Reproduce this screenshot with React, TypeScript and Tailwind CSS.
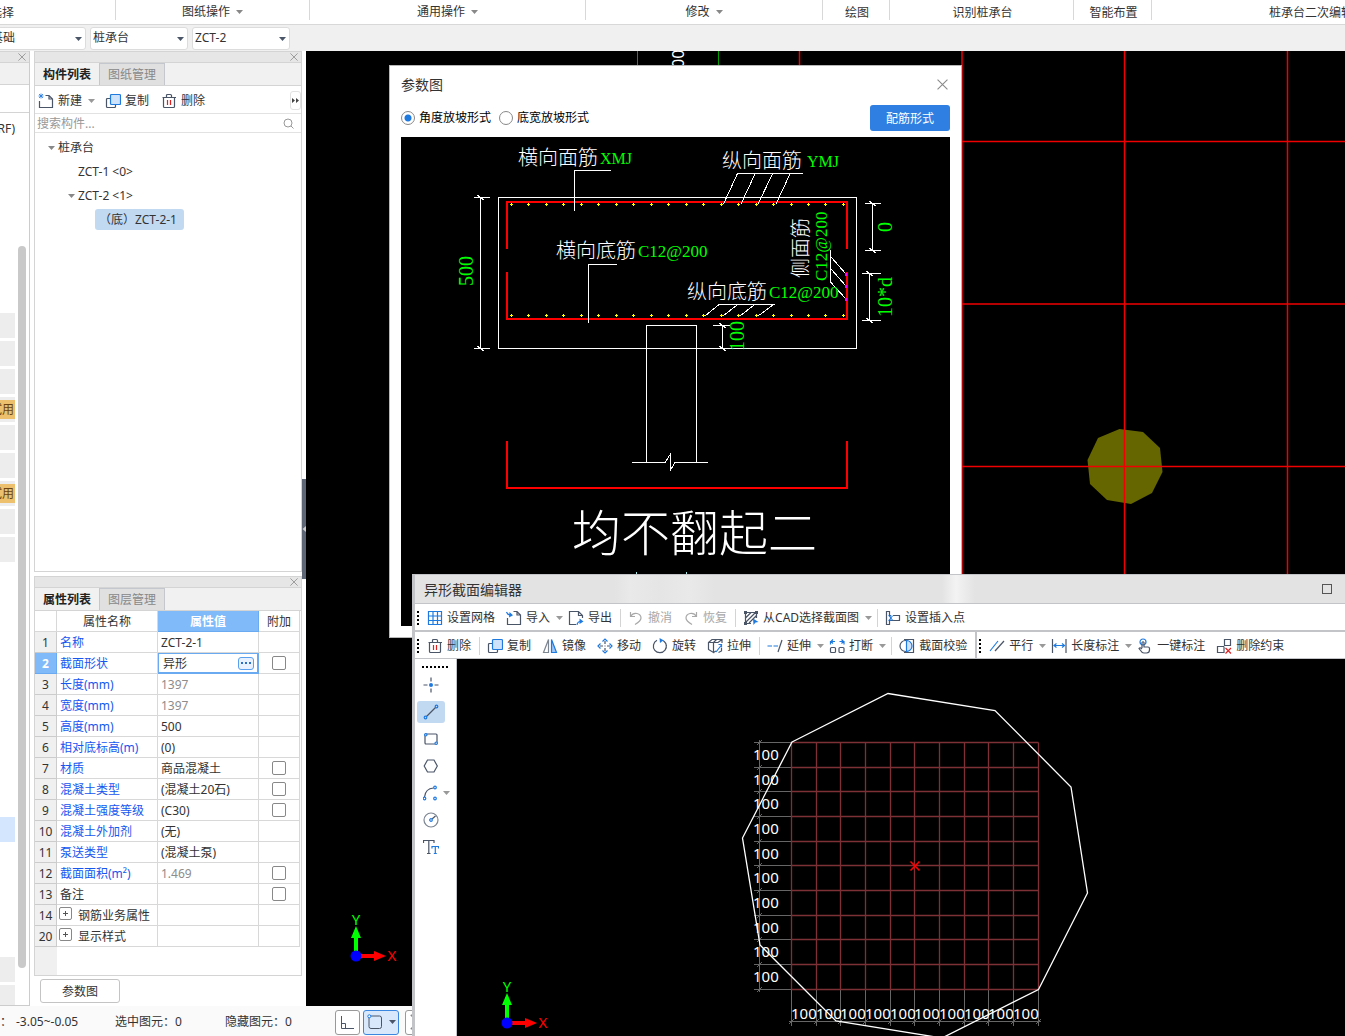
import React, { useState } from 'react';

const INK = '#4a5568';
const BLUE = '#1f7ae0';

const Caret = ({ className = 'text-[#999999]' }: { className?: string }) => (
  <svg width="7" height="4" viewBox="0 0 7 4" className={className}>
    <path d="M0 0H7L3.5 4Z" fill="currentColor" />
  </svg>
);

const Close = ({ size = 8 }: { size?: number }) => (
  <svg width={size} height={size} viewBox="0 0 10 10" fill="none" stroke="#8a8a8a">
    <path d="M0.5 0.5L9.5 9.5M9.5 0.5L0.5 9.5" />
  </svg>
);

const Icon = ({ children }: { children: React.ReactNode }) => (
  <svg width="16" height="16" viewBox="0 0 16 16" fill="none" stroke={INK} strokeWidth="1.2" className="shrink-0">
    {children}
  </svg>
);

const icons = {
  create: (
    <Icon>
      <path d="M7.5 2.5H11L14.5 6V14.5H1.5V8M11 2.5V6H14.5" />
      <path d="M1 1L5 5M5 1L1 5M3 0.5V5.5M0.5 3H5.5" stroke={BLUE} strokeWidth="0.8" />
    </Icon>
  ),
  copy: (
    <Icon>
      <path d="M5 5.5H2.5Q1.5 5.5 1.5 6.5V13.5Q1.5 14.5 2.5 14.5H9.5Q10.5 14.5 10.5 13.5V12" />
      <rect x="5.5" y="1.5" width="10" height="10" rx="1" fill="#cfe2fb" stroke={BLUE} />
    </Icon>
  ),
  trash: (
    <Icon>
      <path d="M1.5 4.5H15M5.5 4.5V2.5Q5.5 1.5 6.5 1.5H9.5Q10.5 1.5 10.5 2.5V4.5M2.5 4.5V13.5Q2.5 14.5 3.5 14.5H12.5Q13.5 14.5 13.5 13.5V4.5" />
      <path d="M6.5 7V12M9.5 7V12" stroke="#e02020" />
    </Icon>
  ),
  grid: (
    <Icon>
      <path d="M1.5 1.5H14.5V14.5H1.5ZM1.5 6H14.5M1.5 10.5H14.5M6 1.5V14.5M10.5 1.5V14.5" stroke={BLUE} />
    </Icon>
  ),
  importFile: (
    <Icon>
      <path d="M7.5 1.5H11L14.5 5V14.5H1.5V8M11 1.5V5H14.5" />
      <path d="M0.5 2Q1.5 5 5 5" stroke={BLUE} />
      <path d="M3.5 2L7 5.2L3 7.5Z" fill={BLUE} stroke="none" />
    </Icon>
  ),
  exportFile: (
    <Icon>
      <path d="M8 14.5H1.5V1.5H10.5L14.5 5.5V8M10.5 1.5V5.5H14.5" />
      <path d="M9 15Q9.5 11.5 12.5 11.5" stroke={BLUE} />
      <path d="M11.5 8.5L15.5 11.5L11.5 14Z" fill={BLUE} stroke="none" />
    </Icon>
  ),
  undo: (
    <Icon>
      <path d="M2.5 2V6.5H7M2.5 6.5Q5 2.5 9 3.5Q13 4.5 13 8Q13 11 7 14.5" stroke="#a8a8a8" />
    </Icon>
  ),
  redo: (
    <Icon>
      <path d="M13.5 2V6.5H9M13.5 6.5Q11 2.5 7 3.5Q3 4.5 3 8Q3 11 9 14.5" stroke="#a8a8a8" />
    </Icon>
  ),
  cad: (
    <Icon>
      <path d="M2.5 3V13M3 2.5H13M13.5 3V8M3 13.5H8M2.5 8L8 2.5M2.5 12.5L12.5 2.5M6 13L13.5 5.5" />
      <path d="M1 1H4V4H1ZM12 1H15V4H12ZM1 12H4V15H1Z" fill={INK} stroke="none" />
      <path d="M10 8.5L15.5 12L12.5 12.5L10.5 15Z" fill={BLUE} stroke="none" />
    </Icon>
  ),
  insertPoint: (
    <Icon>
      <path d="M6 5.5H4.5V1.5H1.5V14.5H4.5V10.5H14.5V5.5H8" />
      <path d="M3.5 5.5L8 10.5M8 5.5L3.5 10.5M5.8 5V11" stroke={BLUE} strokeWidth="1" />
    </Icon>
  ),
  mirror: (
    <Icon>
      <path d="M6.5 1.5V14.5H1.5Z" stroke="#7c8592" />
      <path d="M9.5 1.5V14.5H14.5Z" fill="#9cc6f7" stroke={BLUE} />
    </Icon>
  ),
  move: (
    <Icon>
      <path d="M8 3V6M8 10V13M3 8H6M10 8H13" />
      <path d="M5.5 3.5L8 1L10.5 3.5M5.5 12.5L8 15L10.5 12.5M3.5 5.5L1 8L3.5 10.5M12.5 5.5L15 8L12.5 10.5" stroke={BLUE} />
      <path d="M7.5 8H8.5" />
    </Icon>
  ),
  rotate: (
    <Icon>
      <path d="M10.5 2.2A6.5 6.5 0 1 1 5 2.3M12 3.2A6.5 6.5 0 0 1 14.5 8" />
      <path d="M7.5 0L11.5 2.3L8 5Z" fill={BLUE} stroke="none" />
    </Icon>
  ),
  stretch: (
    <Icon>
      <path d="M1.5 4.5H6.5V14.5L1.5 11.5ZM1.5 4.5L5 1.5H15V5M6.5 4.5L9.5 1.5M6.5 4.5H11L15 1.5M6.5 14.5L9 13" />
      <path d="M9 14L14.5 7M11.5 6.5H14.5V9.5" stroke={BLUE} />
      <path d="M14.5 10V13L11.5 14.5" />
    </Icon>
  ),
  extend: (
    <Icon>
      <path d="M0.5 8H5M6.5 8H11" stroke={BLUE} />
      <path d="M11 14L15 2" />
    </Icon>
  ),
  split: (
    <Icon>
      <rect x="1.5" y="9.5" width="5" height="5" rx="1" />
      <rect x="10" y="9.5" width="5" height="5" rx="1" />
      <path d="M1.5 6.5V3.5H6M4 1.5L2 3.5L4 5.5M15 6.5V3.5H10.5M12.5 1.5L14.5 3.5L12.5 5.5" stroke={BLUE} />
    </Icon>
  ),
  verify: (
    <Icon>
      <path d="M5 1.5H14.5V14.5H5" />
      <circle cx="6.5" cy="8" r="5.5" />
      <path d="M7.5 2.5A5.5 5.5 0 0 1 7.5 13.5Z" fill="#cfe2fb" stroke={BLUE} />
    </Icon>
  ),
  parallel: (
    <Icon>
      <path d="M1 13L9 3" stroke={BLUE} />
      <path d="M6 13L15 3" />
    </Icon>
  ),
  length: (
    <Icon>
      <path d="M1.5 1V15M15 1V15" />
      <path d="M3 7.5H13.5M5.5 5.5L3 7.5L5.5 9.5M11 5.5L13.5 7.5L11 9.5" stroke={BLUE} />
    </Icon>
  ),
  hand: (
    <Icon>
      <circle cx="6" cy="4" r="3" stroke={BLUE} />
      <path d="M5 10V4.5Q6 3 7 4.5V9H11Q12.5 9 12.5 10.5V12Q12.5 15 9.5 15H7Q5 15 4 13L2 10.5Q3 9 5 11" />
    </Icon>
  ),
  unbind: (
    <Icon>
      <path d="M8.5 1.5H14.5V7.5H8.5ZM8 8.5H1.5V14.5H8V8.5" />
      <path d="M9.5 10L15 15.5M15 10L9.5 15.5" stroke="#e02020" />
    </Icon>
  ),
  point: (
    <Icon>
      <path d="M8 0.5V4.5M8 11.5V15.5M0.5 8H4.5M11.5 8H15.5" />
      <circle cx="8" cy="8" r="2" fill={BLUE} stroke="none" />
    </Icon>
  ),
  line: (
    <Icon>
      <path d="M3.5 12.5L12.5 3.5" />
      <circle cx="2.5" cy="13.5" r="1.3" stroke={BLUE} />
      <circle cx="13.5" cy="2.5" r="1.3" stroke={BLUE} />
    </Icon>
  ),
  rect: (
    <Icon>
      <rect x="2" y="3" width="12" height="10" rx="1" />
      <circle cx="2.8" cy="3.8" r="1.2" fill="#fff" stroke={BLUE} />
      <circle cx="13.2" cy="12.2" r="1.2" fill="#fff" stroke={BLUE} />
    </Icon>
  ),
  hexagon: (
    <Icon>
      <path d="M4.5 2H11L14.3 8L11 14H4.5L1.2 8Z" />
    </Icon>
  ),
  arc: (
    <Icon>
      <path d="M1.5 12Q2.5 3.5 10.5 3" />
      <circle cx="1.5" cy="13.5" r="1.3" stroke={BLUE} />
      <circle cx="12" cy="2.5" r="1.3" stroke={BLUE} />
      <circle cx="12" cy="13.5" r="1.3" stroke={BLUE} />
    </Icon>
  ),
  circle: (
    <Icon>
      <circle cx="8" cy="8" r="7" stroke="#7c8592" />
      <path d="M9 7L12.5 4" />
      <circle cx="8" cy="8" r="1.3" stroke={BLUE} />
    </Icon>
  ),
  text: (
    <Icon>
      <path d="M0.5 4V1.5H11V4M5.8 1.5V14.5M4 14.5H7.5" />
      <path d="M9 9.5V7.5H15.5V9.5M12.3 7.5V14.5M10.8 14.5H13.8" stroke={BLUE} />
    </Icon>
  ),
};

type IconName = keyof typeof icons;

const ribbonGroups = [
  { label: '图纸操作', caret: true, width: 'w-[194px]' },
  { label: '通用操作', caret: true, width: 'w-[276px]' },
  { label: '修改', caret: true, width: 'w-[237px]' },
  { label: '绘图', caret: false, width: 'w-[67px]' },
  { label: '识别桩承台', caret: false, width: 'w-[184px]' },
  { label: '智能布置', caret: false, width: 'w-[78px]' },
];

const Ribbon = () => (
  <div className="flex h-[25px] shrink-0 border-b border-[#d8d8d8] bg-white">
    <div className="flex h-5 w-[116px] shrink-0 items-center border-r border-[#d8d8d8]">
      <span className="-ml-2.5 pt-1.5">选择</span>
    </div>
    {ribbonGroups.map((g) => (
      <div key={g.label} className={`flex h-5 shrink-0 items-center justify-center gap-1.5 border-r border-[#d8d8d8] ${g.width}`}>
        <span className={g.caret ? 'pt-1' : 'pt-1.5 pl-0.5'}>{g.label}</span>
        {g.caret && <Caret className="mt-1 text-[#888888]" />}
      </div>
    ))}
    <div className="flex h-5 min-w-[318px] flex-1 items-center justify-center">
      <span className="pt-1.5">桩承台二次编辑</span>
    </div>
  </div>
);

const Picker = ({ label, value }: { label: string; value: string }) => (
  <div className="relative h-[23px] w-[98px] shrink-0">
    <select
      aria-label={label}
      className="size-full appearance-none rounded-[3px] border border-[#dcdcdc] bg-white pl-0.5 leading-5"
    >
      <option>{value}</option>
    </select>
    <Caret className="pointer-events-none absolute top-2.5 right-1 text-[#4a5568]" />
  </div>
);

const stripRows = Array.from({ length: 25 }, (_, i) => {
  if (i === 3 || i === 6) return 'trial';
  if (i < 9 || i > 22) return 'plain';
  return i === 18 ? 'active' : 'empty';
});

const stripColors: Record<string, string> = {
  trial: 'bg-[#ededed]',
  plain: 'bg-[#ededed]',
  active: 'bg-[#d4e6fd]',
  empty: 'bg-white',
};

const NavStrip = () => (
  <div className="flex w-[30px] shrink-0 flex-col overflow-hidden border-r border-b border-[#cccccc] bg-white">
    <div className="flex h-3 shrink-0 items-center justify-end border-y border-[#d4d4d4] bg-[#e6e6e6] pr-[3px]">
      <Close />
    </div>
    <div className="h-[22px] shrink-0 border-b border-[#d4d4d4] bg-[#f1f1f1]" />
    <div className="h-7 shrink-0 border-b border-[#d4d4d4]" />
    <div className="flex min-h-0 flex-1 justify-between pr-[3px]">
      <div className="w-[15px] overflow-hidden">
        <p className="h-[200px] pt-2">
          <span className="float-right">(RF)</span>
        </p>
        {stripRows.map((kind, i) => (
          <div key={i} className={`mb-[3px] flex h-[25px] items-center justify-end ${stripColors[kind]}`}>
            {kind === 'trial' && (
              <span className="h-[19px] bg-[#ecc06c] pr-px leading-[19px] whitespace-nowrap text-[#6b4310]">试用</span>
            )}
          </div>
        ))}
      </div>
      <div className="mt-[133px] mb-[37px] w-2 rounded-full bg-[#c9c9c9]" />
    </div>
  </div>
);

const PanelHead = ({ tabs }: { tabs: [string, string] }) => (
  <>
    <div className="flex h-[11px] shrink-0 items-center justify-end border-b border-[#d4d4d4] bg-[#e6e6e6] pr-[3px]">
      <Close />
    </div>
    <div className="flex h-[23px] shrink-0 border-b border-[#d4d4d4] bg-[#f1f1f1]">
      <button className="w-[65px] border-r border-[#c4c8ce] pt-px font-bold text-[#222222]">{tabs[0]}</button>
      <button className="w-[65px] border-t border-r border-[#c4c8ce] bg-[#e0e0e0] text-[#888888]">{tabs[1]}</button>
    </div>
  </>
);

const ComponentPanel = () => (
  <div className="flex min-h-0 flex-1 flex-col border border-[#d4d4d4] bg-white">
    <PanelHead tabs={['构件列表', '图纸管理']} />
    <div className="flex h-7 shrink-0 items-center border-b border-[#e2e2e2] pt-0.5 pl-[3px]">
      <button className="flex items-center gap-1">{icons.create}新建</button>
      <Caret className="mr-2.5 ml-1.5 text-[#999999]" />
      <button className="mr-3 flex items-center gap-1">{icons.copy}复制</button>
      <button className="flex items-center gap-1">{icons.trash}删除</button>
      <button aria-label="更多" className="ml-auto flex h-[19px] w-[11px] items-center justify-center rounded-[3px] border border-[#e2e2e2]">
        <svg width="7" height="5" viewBox="0 0 7 5" fill="#444" className="shrink-0">
          <path d="M0 0L3 2.5L0 5ZM4 0L7 2.5L4 5Z" />
        </svg>
      </button>
    </div>
    <div className="flex h-[19px] shrink-0 items-center border-b border-[#e2e2e2] pr-[7px]">
      <input
        aria-label="搜索构件"
        placeholder="搜索构件..."
        className="min-w-0 flex-1 pt-0.5 pl-0.5 leading-4 outline-none placeholder:text-[#999999]"
      />
      <svg width="11" height="11" viewBox="0 0 11 11" fill="none" stroke="#999999">
        <circle cx="5" cy="5" r="4" />
        <path d="M8 8L10.5 10.5" />
      </svg>
    </div>
    <ul className="pt-[3px] leading-6">
      <li className="flex items-center gap-[3px] pl-[13px]">
        <Caret className="text-[#888888]" />
        桩承台
      </li>
      <li className="pl-[43px]">ZCT-1 &lt;0&gt;</li>
      <li className="flex items-center gap-[3px] pl-[33px]">
        <Caret className="text-[#888888]" />
        ZCT-2 &lt;1&gt;
      </li>
      <li className="flex h-[22px] items-center pl-[60px]">
        <span className="h-[21px] w-[89px] rounded-[3px] bg-[#c2d9f2] pl-1 leading-[21px] whitespace-nowrap">（底）ZCT-2-1</span>
      </li>
    </ul>
  </div>
);

type Row = { no: number; name: string; value: string; tone?: 'muted'; check?: boolean; plain?: boolean; group?: boolean };

const rows: Row[] = [
  { no: 1, name: '名称', value: 'ZCT-2-1' },
  { no: 2, name: '截面形状', value: '异形', check: true },
  { no: 3, name: '长度(mm)', value: '1397', tone: 'muted' },
  { no: 4, name: '宽度(mm)', value: '1397', tone: 'muted' },
  { no: 5, name: '高度(mm)', value: '500' },
  { no: 6, name: '相对底标高(m)', value: '(0)' },
  { no: 7, name: '材质', value: '商品混凝土', check: true },
  { no: 8, name: '混凝土类型', value: '(混凝土20石)', check: true },
  { no: 9, name: '混凝土强度等级', value: '(C30)', check: true },
  { no: 10, name: '混凝土外加剂', value: '(无)' },
  { no: 11, name: '泵送类型', value: '(混凝土泵)' },
  { no: 12, name: '截面面积(m²)', value: '1.469', tone: 'muted', check: true },
  { no: 13, name: '备注', value: '', plain: true, check: true },
  { no: 14, name: '钢筋业务属性', value: '', plain: true, group: true },
  { no: 20, name: '显示样式', value: '', plain: true, group: true },
];

const PropertyPanel = () => {
  const [shape, setShape] = useState('异形');

  return (
    <div className="flex h-[400px] shrink-0 flex-col border border-[#d4d4d4] bg-white">
      <PanelHead tabs={['属性列表', '图层管理']} />
      <table className="w-[265px] table-fixed border-separate border-spacing-0 leading-[18px]">
        <colgroup>
          <col className="w-[22px]" />
          <col className="w-[101px]" />
          <col className="w-[101px]" />
          <col className="w-[41px]" />
        </colgroup>
        <thead>
          <tr className="h-[21px]">
            <th className="border-r border-b border-[#d8d8d8] p-0" />
            <th className="border-r border-b border-[#d8d8d8] p-0 pt-0.5 font-normal">属性名称</th>
            <th className="border-r border-b border-[#6aaaf0] bg-[#80baf9] p-0 pt-0.5 text-white">属性值</th>
            <th className="border-r border-b border-[#d8d8d8] p-0 pt-0.5 font-normal">附加</th>
          </tr>
        </thead>
        <tbody>
          {rows.map((r) => (
            <tr key={r.no} className="h-[21px]">
              <td
                className={`border-r border-b p-0 pt-0.5 text-center ${
                  r.no === 2 ? 'border-[#6aaaf0] bg-[#80baf9] font-bold text-white' : 'border-[#cccccc] bg-[#f0f0f0]'
                }`}
              >
                {r.no}
              </td>
              <td className={`border-r border-b border-[#d8d8d8] p-0 pt-0.5 whitespace-nowrap ${r.plain ? '' : 'text-[#1657f0]'} ${r.group ? 'pl-0.5' : 'pl-[3px]'}`}>
                {r.group ? (
                  <span className="flex items-start gap-1.5">
                    <button aria-label="展开" className="flex size-[13px] items-center justify-center rounded-[2px] border border-[#888888]">
                      <svg width="7" height="7" viewBox="0 0 7 7" stroke="#555" className="shrink-0">
                        <path d="M3.5 1V6M1 3.5H6" />
                      </svg>
                    </button>
                    {r.name}
                  </span>
                ) : (
                  r.name
                )}
              </td>
              {r.no === 2 ? (
                <td className="border-r border-b border-[#6aaaf0] p-0">
                  <div className="flex h-5 items-center border border-[#6aaaf0] pr-[3px] pl-1">
                    <input
                      aria-label={r.name}
                      value={shape}
                      onChange={(e) => setShape(e.target.value)}
                      className="h-[18px] min-w-0 flex-1 pt-0.5 outline-none"
                    />
                    <button aria-label="编辑截面" className="flex h-[13px] w-4 items-center justify-center rounded-[3px] border border-[#5aa0ee] bg-[#e8f1fd]">
                      <svg width="10" height="2" viewBox="0 0 10 2" fill="#2a6fc9" className="shrink-0">
                        <path d="M0 0H2V2H0ZM4 0H6V2H4ZM8 0H10V2H8Z" />
                      </svg>
                    </button>
                  </div>
                </td>
              ) : (
                <td className={`border-r border-b border-[#d8d8d8] p-0 pt-0.5 pl-[3px] whitespace-nowrap ${r.tone === 'muted' ? 'text-[#8c8c8c]' : ''}`}>
                  {r.value}
                </td>
              )}
              <td className="border-r border-b border-[#d8d8d8] p-0">
                {r.check && (
                  <input
                    type="checkbox"
                    aria-label={`${r.name}附加`}
                    className="mx-auto block size-3.5 appearance-none rounded-[2px] border border-[#888888] bg-white checked:bg-[#2f7fe2]"
                  />
                )}
              </td>
            </tr>
          ))}
        </tbody>
      </table>
      <div className="w-[22px] flex-1 bg-[#f0f0f0]" />
    </div>
  );
};

// UCS marker drawn in the corner of both canvases
const Axis = ({ x, y }: { x: number; y: number }) => (
  <g transform={`translate(${x} ${y})`}>
    <path d="M-2 0V-18H-5L0 -30L5 -18H2V0Z" fill="#00ff00" />
    <path d="M0 -2H18V-5L30 0L18 5V2H0Z" fill="#ff0000" />
    <circle r="5.5" fill="#0000ff" />
    <text x="0" y="-31" fill="#00ff00" fontSize="15" textAnchor="middle">Y</text>
    <text x="36" y="5" fill="#ff0000" fontSize="15" textAnchor="middle">X</text>
  </g>
);

const ModelCanvas = () => (
  <svg className="min-w-0 flex-1 bg-black" role="img" aria-label="模型视图">
    <g transform="translate(-306 -51)">
      <path
        d="M1087.5 460L1098 438L1119.500 429L1143 432L1160 448L1162.500 472L1152 493L1131 504L1107 500L1090 484Z"
        fill="#666600"
      />
      <path d="M637.5 51V70M718.5 51V70" stroke="#00a000" />
      <path d="M799.5 51V70M962 51V600M1124.5 51V600M1287.5 51V600M962 141.5H2400M962 304H2400M962 466.5H2400" stroke="#f00000" strokeWidth="1.5" />
      <text transform="translate(684 68) rotate(-90)" fill="#fff" fontSize="16">00</text>
      <Axis x={356} y={956} />
    </g>
  </svg>
);

const rebarX = Array.from({ length: 20 }, (_, i) => Math.round(511 + i * 17.47));

const ParamDrawing = () => (
  <svg className="block h-[489px] w-full bg-black" role="img" aria-label="均不翻起二">
    <g transform="translate(-401 -137)" fill="none" stroke="#fff">
      <g shapeRendering="crispEdges">
        <path d="M498.500 197.500H856.500V348.500H498.500ZM646.500 462V325.500H696.500V462M632 462.500H665L670.500 454V470L675 462.500H708" />
        <path d="M474 197.500H490M474 348.500H490M480.500 197V349M477 195L484 200M477 346L484 351" />
        <path d="M865 203.500H881M865 250.500H881M872.500 203V251M869 201L876 206M869 248L876 253" />
        <path d="M862 273.500H881M862 320.500H881M869.500 273V321M866 271L873 276M866 318L873 323" />
        <path d="M713 325.500H730M722.500 325V349M719 323L726 328M719 346L726 351" />
        <path d="M507 249V202H847V249M507 272V319H847V272M507 441V488H847V441" stroke="#ff0000" strokeWidth="2" />
        <path d="M574.500 211V170.500H611M588.500 323V264.500H617" />
        <path d="M803 173.500H737.500L723.500 204M755 174L741 204M772.500 174L758 204M790 174L776 204" />
        <path d="M775 304.500H719L705 316M737 305L723 316M754 305L740 316M773 305L758 316" />
        <path d="M830.500 250V282L846 299M831 257L846 274M831 269L846 286" />
        <path
          d={rebarX.map((x) => `M${x - 1} 204h3v1h-3zM${x} 203h1v3h-1zM${x - 1} 315h3v1h-3zM${x} 314h1v3h-1z`).join('')}
          fill="#ffff00"
          stroke="none"
        />
        <path d="M845 273h2v3h-2zM845 285h2v3h-2zM845 298h2v3h-2z" fill="#ff00ff" stroke="none" />
        <path d="M636 572V575M686 572V575" stroke="#9fe8e8" />
      </g>
      <g stroke="none" fill="#fff" fontSize="20" className="font-light">
        <text x="518" y="165">横向面筋</text>
        <text x="722" y="168">纵向面筋</text>
        <text x="556" y="258">横向底筋</text>
        <text x="687" y="299">纵向底筋</text>
        <text transform="translate(808 278) rotate(-90)">侧面筋</text>
        <text x="572" y="551" fontSize="49">均不翻起二</text>
      </g>
      <g stroke="none" fill="#00ff00" fontSize="17" className="font-['Liberation_Serif',serif]">
        <text x="600" y="164" fontSize="16">XMJ</text>
        <text x="807" y="167" fontSize="16">YMJ</text>
        <text x="638" y="257">C12@200</text>
        <text x="769" y="298">C12@200</text>
        <text transform="translate(827 281) rotate(-90)">C12@200</text>
        <g fontSize="20">
          <text transform="translate(892 232) rotate(-90)">0</text>
          <text transform="translate(892 317) rotate(-90)">10*d</text>
          <text transform="translate(473 286) rotate(-90)">500</text>
          <text transform="translate(744 351) rotate(-90)">100</text>
        </g>
      </g>
    </g>
  </svg>
);

const SlopeRadio = ({ label, checked, onChange }: { label: string; checked: boolean; onChange: () => void }) => (
  <label className="flex items-center gap-1 text-black">
    <input
      type="radio"
      name="slope"
      checked={checked}
      onChange={onChange}
      className="size-3.5 appearance-none rounded-full border border-[#888888] bg-white checked:bg-[radial-gradient(circle,#1f7ae0_3px,#ffffff_4px)]"
    />
    {label}
  </label>
);

const ParamDialog = () => {
  const [slope, setSlope] = useState('angle');

  return (
    <section className="absolute top-[65px] left-[389px] w-[573px] border border-[#b8b8b8] bg-white px-[11px] pb-[11px]">
      <div className="flex h-[39px] items-center justify-between pb-0.5">
        <h2 className="text-sm">参数图</h2>
        <button aria-label="关闭" className="px-0.5">
          <Close size={11} />
        </button>
      </div>
      <div className="mb-1.5 flex h-[26px] items-center gap-2">
        <SlopeRadio label="角度放坡形式" checked={slope === 'angle'} onChange={() => setSlope('angle')} />
        <SlopeRadio label="底宽放坡形式" checked={slope === 'width'} onChange={() => setSlope('width')} />
        <button className="ml-auto h-[26px] w-20 rounded-[3px] bg-[#2f7fe2] pt-0.5 text-white">配筋形式</button>
      </div>
      <ParamDrawing />
    </section>
  );
};

const Grip = () => (
  <div className="w-3 shrink-0 pl-0.5">
    <svg width="2" height="14" viewBox="0 0 2 14" className="block">
      <path d="M0 0H2V2H0ZM0 4H2V6H0ZM0 8H2V10H0ZM0 12H2V14H0Z" />
    </svg>
  </div>
);

const Sep = () => <div className="mr-[7px] h-[18px] w-px shrink-0 bg-[#d4d4d4]" />;

type ToolProps = { icon: IconName; label: string; tail?: 'gap' | 'tight' | 'caret'; disabled?: boolean };

const Tool = ({ icon, label, tail = 'gap', disabled }: ToolProps) => (
  <>
    <button
      disabled={disabled}
      className={`flex shrink-0 items-center gap-1 whitespace-nowrap ${disabled ? 'text-[#a8a8a8]' : ''} ${
        tail === 'gap' ? 'mr-[11px]' : tail === 'tight' ? 'mr-2' : ''
      }`}
    >
      {icons[icon]}
      {label}
    </button>
    {tail === 'caret' && (
      <button aria-label={`${label}选项`} className="flex h-4 w-[18px] shrink-0 items-center justify-center">
        <Caret />
      </button>
    )}
  </>
);

const drawTools: { icon: IconName; label: string; menu?: boolean }[] = [
  { icon: 'point', label: '点' },
  { icon: 'line', label: '直线' },
  { icon: 'rect', label: '矩形' },
  { icon: 'hexagon', label: '多边形' },
  { icon: 'arc', label: '弧线', menu: true },
  { icon: 'circle', label: '圆' },
  { icon: 'text', label: '文字' },
];

const steps = Array.from({ length: 11 }, (_, i) => Math.round(i * 24.67));

const SectionCanvas = () => (
  <svg className="h-full min-w-0 flex-1 bg-black" role="img" aria-label="截面草图">
    <g transform="translate(-457 -659)" fill="none">
      <g stroke="#666666">
        <path d="M759.500 740V992M789 1021.500H1041" />
        {steps.map((s) => (
          <path key={s} d={`M754 ${742.5 + s}H792M757 ${745 + s}L762 ${740 + s}M${791.5 + s} 990V1026M${789 + s} 1024L${794 + s} 1019`} />
        ))}
      </g>
      <g stroke="#7d3035" strokeWidth="1.3">
        {steps.map((s) => (
          <path key={s} d={`M791.5 ${742.5 + s}H1038.5M${791.5 + s} 742.5V989.5`} />
        ))}
      </g>
      <g fill="#ffffff" fontSize="15">
        {steps.slice(0, 10).map((s) => (
          <React.Fragment key={s}>
            <text x="753" y={760 + s}>100</text>
            <text x={791 + s} y="1019">100</text>
          </React.Fragment>
        ))}
      </g>
      <path
        d="M792 742L888 693.500L995 710.500L1071 787L1087.500 893L1038.500 989.500L942 1038L836 1021L760 945L742.500 838Z"
        stroke="#ffffff"
        strokeWidth="1.3"
      />
      <path d="M910.500 861.500L919.500 870.500M919.500 861.500L910.500 870.500" stroke="#ff0000" strokeWidth="1.6" />
      <Axis x={507} y={1023} />
    </g>
  </svg>
);

const SectionEditor = () => {
  const [tool, setTool] = useState('直线');

  return (
    <section className="absolute top-[574px] right-0 bottom-0 left-[412px] flex flex-col overflow-hidden border-t border-l-[3px] border-[#c2c4c8] bg-white">
      <div className="flex h-[29px] shrink-0 items-center justify-between border-b border-[#c2c4c8] bg-[linear-gradient(90deg,#e3e3e3_200px,#e9e9e9_215px,#e5e5e5_245px,#e9e9e9_275px,#e3e3e3_300px,#e3e3e3_527px,#f3f3f3_541px,#e3e3e3_560px)] pt-0.5 pr-[13px] pl-[9px]">
        <h2 className="text-sm">异形截面编辑器</h2>
        <button aria-label="最大化" className="mb-0.5 size-2.5 border border-[#555555]" />
      </div>
      <div className="flex h-7 shrink-0 items-center border-b-2 border-[#c2c4c8] pt-0.5">
        <Grip />
        <Tool icon="grid" label="设置网格" />
        <Tool icon="importFile" label="导入" tail="caret" />
        <Tool icon="exportFile" label="导出" tail="tight" />
        <Sep />
        <Tool icon="undo" label="撤消" disabled />
        <Tool icon="redo" label="恢复" tail="tight" disabled />
        <Sep />
        <Tool icon="cad" label="从CAD选择截面图" tail="caret" />
        <Sep />
        <Tool icon="insertPoint" label="设置插入点" />
      </div>
      <div className="flex h-[27px] shrink-0 items-center border-b border-[#c2c4c8]">
        <div className="flex h-full items-center pt-0.5">
          <Grip />
          <Tool icon="trash" label="删除" tail="tight" />
          <Sep />
          <Tool icon="copy" label="复制" />
          <Tool icon="mirror" label="镜像" />
          <Tool icon="move" label="移动" />
          <Tool icon="rotate" label="旋转" />
          <Tool icon="stretch" label="拉伸" tail="tight" />
          <Sep />
          <Tool icon="extend" label="延伸" tail="caret" />
          <Tool icon="split" label="打断" tail="caret" />
          <Sep />
          <Tool icon="verify" label="截面校验" tail="tight" />
        </div>
        <div className="flex h-full items-center border-l-2 border-[#c2c4c8] pt-0.5">
          <Grip />
          <Tool icon="parallel" label="平行" tail="caret" />
          <Tool icon="length" label="长度标注" tail="caret" />
          <Tool icon="hand" label="一键标注" />
          <Tool icon="unbind" label="删除约束" />
        </div>
      </div>
      <div className="flex min-h-0 flex-1">
        <div className="w-[42px] shrink-0 border-r border-[#c2c4c8] pt-[7px] pl-0.5">
          <svg width="26" height="2" viewBox="0 0 26 2" className="mb-1.5 ml-[5px] block">
            <path d="M0 1H26" stroke="#000" strokeWidth="2" strokeDasharray="2 2" />
          </svg>
          {drawTools.map((t) => (
            <div key={t.label} className="mb-[5px] flex items-center">
              <button
                aria-label={t.label}
                onClick={() => setTool(t.label)}
                className={`flex h-[22px] w-7 shrink-0 items-center justify-center rounded-[3px] ${tool === t.label ? 'bg-[#c2d9f2]' : ''}`}
              >
                {icons[t.icon]}
              </button>
              {t.menu && <Caret className="-ml-0.5 shrink-0 text-[#999999]" />}
            </div>
          ))}
        </div>
        <SectionCanvas />
      </div>
    </section>
  );
};

const StatusBar = () => (
  <div className="flex h-[30px] shrink-0 items-center bg-[#fafafa] pt-0.5">
    <span className="w-4">：</span>
    <span className="w-[99px]">-3.05~-0.05</span>
    <span className="w-[110px]">选中图元：0</span>
    <span className="w-[110px]">隐藏图元：0</span>
    <button aria-label="正交" className="mr-[3px] flex h-[25px] w-[25px] items-center justify-center rounded-[3px] border border-[#999999] bg-white">
      <svg width="15" height="15" viewBox="0 0 15 15" fill="none" stroke={INK} className="shrink-0">
        <path d="M1.500 1V13.500H14M1.500 8.500H5.500V13.500" />
      </svg>
    </button>
    <button aria-label="捕捉" className="mr-1.5 flex h-[25px] w-9 items-center justify-center gap-1.5 rounded-[3px] border border-[#3b87e0] bg-[#d9e8fb]">
      <svg width="16" height="16" viewBox="0 0 16 16" fill="none" stroke={INK} className="shrink-0">
        <rect x="2" y="2" width="12.500" height="12.500" rx="2" />
        <circle cx="2.300" cy="2.300" r="1.500" fill="#fff" stroke={BLUE} />
      </svg>
      <Caret className="text-[#4a5568]" />
    </button>
    <button aria-label="交点" className="flex h-[25px] w-[25px] items-center justify-center rounded-[3px] border border-[#999999] bg-white">
      <Close size={16} />
    </button>
  </div>
);

const App = () => (
  <div className="relative flex h-screen flex-col overflow-hidden bg-white font-['Noto_Sans','Noto_Sans_CJK_SC',sans-serif] text-xs text-[#333333]">
    <Ribbon />
    <div className="-ml-3 flex h-[26px] shrink-0 items-center gap-1 bg-[#f0f0f0]">
      <Picker label="楼层构件" value="基础" />
      <Picker label="构件类型" value="桩承台" />
      <Picker label="构件" value="ZCT-2" />
    </div>
    <div className="flex min-h-0 flex-1">
      <NavStrip />
      <div className="ml-1 flex w-[268px] shrink-0 flex-col">
        <ComponentPanel />
        <div className="h-1 shrink-0" />
        <PropertyPanel />
        <div className="h-[30px] shrink-0 px-1.5 pt-[3px]">
          <button className="h-6 w-20 rounded-[3px] border border-[#c4c4c4] bg-white pt-0.5">参数图</button>
        </div>
      </div>
      <button aria-label="收起面板" className="mt-[428px] flex h-[100px] w-1 shrink-0 items-center bg-[#5d6775]">
        <svg width="4" height="6" viewBox="0 0 4 6" fill="#cccccc">
          <path d="M4 0V6L0.500 3Z" />
        </svg>
      </button>
      <ModelCanvas />
    </div>
    <StatusBar />
    <ParamDialog />
    <SectionEditor />
  </div>
);

export default App;
